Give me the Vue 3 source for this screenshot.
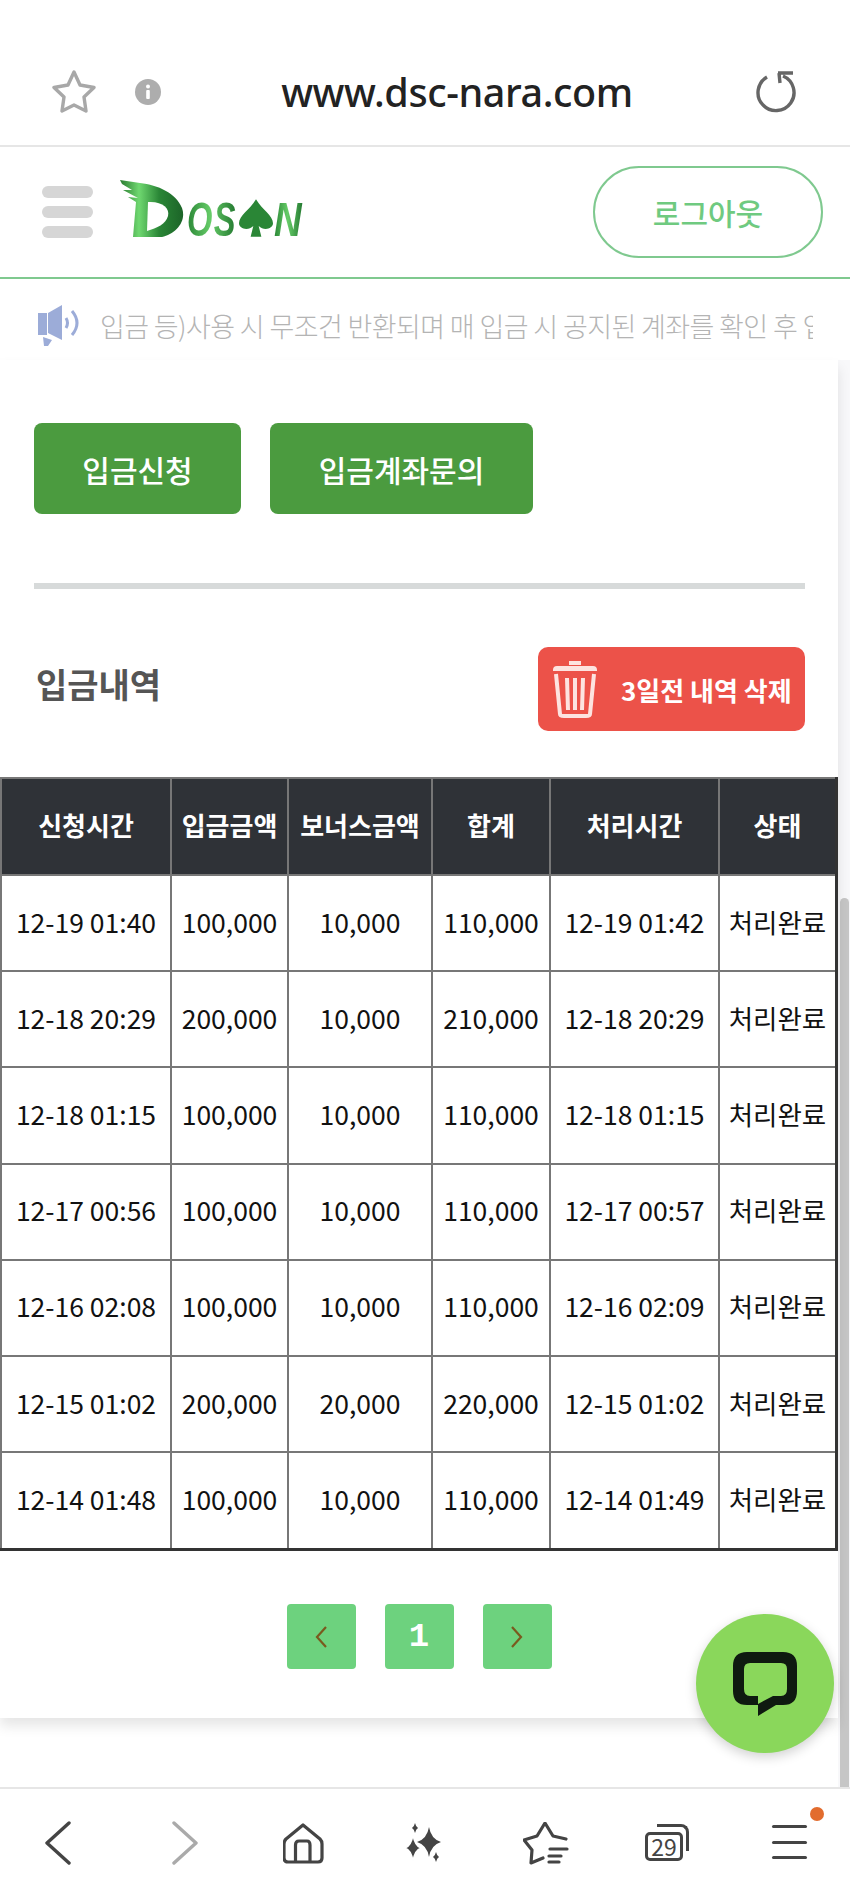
<script setup>
const cols = ['신청시간', '입금금액', '보너스금액', '합계', '처리시간', '상태']
const rows = [
  ['12-19 01:40', '100,000', '10,000', '110,000', '12-19 01:42'],
  ['12-18 20:29', '200,000', '10,000', '210,000', '12-18 20:29'],
  ['12-18 01:15', '100,000', '10,000', '110,000', '12-18 01:15'],
  ['12-17 00:56', '100,000', '10,000', '110,000', '12-17 00:57'],
  ['12-16 02:08', '100,000', '10,000', '110,000', '12-16 02:09'],
  ['12-15 01:02', '200,000', '20,000', '220,000', '12-15 01:02'],
  ['12-14 01:48', '100,000', '10,000', '110,000', '12-14 01:49'],
]
</script>

<template>
  <div class="screen">
    <header class="browser-bar">
      <svg class="star" width="46" height="44" viewBox="0 0 46 44"><path d="M23 2 L29 15 L43 17.5 L33 27 L35 41 L23 35 L11 41 L13 27 L3 17.5 L17 15 Z" fill="none" stroke="#a8a8a8" stroke-width="3.4" stroke-linejoin="round"/></svg>
      <svg class="info" width="26" height="26" viewBox="0 0 26 26"><circle cx="13" cy="13" r="13" fill="#adadad"/><rect x="11.2" y="11" width="3.6" height="9" rx="1" fill="#fff"/><circle cx="13" cy="7.5" r="2" fill="#fff"/></svg>
      <div class="url">www.dsc-nara.com</div>
      <svg class="reload" width="44" height="44" viewBox="0 0 44 44"><path d="M14 7 A18 18 0 1 0 30 6 M26 3 L27 13 M25 3 L40 3" fill="none" stroke="#666" stroke-width="3.4"/></svg>
    </header>

    <div class="site-head">
      <div class="burger"><span></span><span></span><span></span></div>
      <div class="logo">
        <svg width="66" height="58" viewBox="0 0 66 58" class="logo-d">
          <defs><linearGradient id="g" x1="0" y1="0" x2="1" y2="0"><stop offset="0" stop-color="#2a7a30"/><stop offset=".3" stop-color="#6fd870"/><stop offset=".62" stop-color="#2a8636"/><stop offset="1" stop-color="#1c6428"/></linearGradient></defs>
          <path d="M0 0 L20 3 C38 5 56 13 62 28 C67 42 55 54 42 57 L13 57 L16 22 L8 17 L18 18 L3 10 L12 10 L2 4 Z" fill="url(#g)"/>
          <path d="M28 22 C42 21 50 28 48 36 C46 44 37 48 27 51 Z" fill="#fff"/>
        </svg>
        <span class="logo-text os">OS</span>
        <svg width="34" height="40" viewBox="0 0 38 42" class="spade"><path d="M19 0 C26 12 38 18 38 27 C38 33 28 36 22 30 L25 42 L13 42 L16 30 C10 36 0 33 0 27 C0 18 12 12 19 0 Z" fill="#2a8636"/></svg>
        <span class="logo-text n">N</span>
      </div>
      <button class="logout">로그아웃</button>
    </div>

    <div class="ticker">
      <svg width="46" height="42" viewBox="0 0 46 42"><path d="M0 8 H9 V30 H0 Z M10 8 L24 0 V35 L10 28 Z M5 32 L14 35 L10 41 L6 41 Z" fill="#9cacd8"/><path d="M28 13 Q31 18 28 23 M34 6 Q44 18 34 30" fill="none" stroke="#9cacd8" stroke-width="3"/></svg>
      <div class="ticker-window"><span>입금 등)사용 시 무조건 반환되며 매 입금 시 공지된 계좌를 확인 후 입금</span></div>
    </div>

    <div class="scroll-track"><div class="scroll-thumb"></div></div>

    <main class="card">
      <div class="actions">
        <button class="green first">입금신청</button>
        <button class="green second">입금계좌문의</button>
      </div>
      <div class="divider"></div>
      <div class="title-row">
        <h2>입금내역</h2>
        <button class="delete">
          <svg width="46" height="58" viewBox="0 0 46 58"><path d="M17 5 V1 H29 V5 M1 10 Q1 6 5 6 H41 Q45 6 45 10 V11 H1 Z" fill="#fde3e0"/><path d="M4 14 L8 54 Q8 56 12 56 H34 Q38 56 38 54 L42 14 M15 18 L16 50 M23 18 V50 M31 18 L30 50" fill="none" stroke="#fde3e0" stroke-width="4"/></svg>
          <span>3일전 내역 삭제</span>
        </button>
      </div>
      <table>
        <thead><tr><th v-for="c in cols" :key="c">{{ c }}</th></tr></thead>
        <tbody>
          <tr v-for="r in rows" :key="r[0]">
            <td v-for="(v, i) in r" :key="i">{{ v }}</td>
            <td>처리완료</td>
          </tr>
        </tbody>
      </table>
      <div class="pager">
        <button><svg width="14" height="24" viewBox="0 0 14 24"><path d="M12 2 L3 12 L12 22" fill="none" stroke="#7a5a1e" stroke-width="2.2"/></svg></button>
        <button class="num">1</button>
        <button><svg width="14" height="24" viewBox="0 0 14 24"><path d="M2 2 L11 12 L2 22" fill="none" stroke="#7a5a1e" stroke-width="2.2"/></svg></button>
      </div>
    </main>

    <button class="fab">
      <svg width="64" height="64" viewBox="0 0 64 64"><path d="M14 0 H50 Q64 0 64 14 V39 Q64 53 50 53 H43 L25 64 V53 H14 Q0 53 0 39 V14 Q0 0 14 0 Z M17 11 Q11 11 11 17 V37 Q11 44 17 44 H25 V52 L40 44 H48 Q54 44 54 37 V17 Q54 11 48 11 Z" fill="#0f1a10" fill-rule="evenodd"/></svg>
    </button>

    <nav class="bottom">
      <svg class="i-back" width="28" height="44" viewBox="0 0 28 44"><path d="M24 2 L2 22 L24 42" fill="none" stroke="#444" stroke-width="3.4" stroke-linecap="round" stroke-linejoin="round"/></svg>
      <svg class="i-fwd" width="28" height="44" viewBox="0 0 28 44"><path d="M2 2 L24 22 L2 42" fill="none" stroke="#aaa" stroke-width="3.4" stroke-linecap="round" stroke-linejoin="round"/></svg>
      <svg class="i-home" width="41" height="41" viewBox="0 0 41 41"><path d="M20 2 L37 16 Q39 18 39 21 V35 Q39 39 35 39 H5 Q1 39 1 35 V21 Q1 18 3 16 Z M12.5 39 V22 Q12.5 18 16 18 H24 Q27 18 27 22 V39" fill="none" stroke="#444" stroke-width="3.2" stroke-linejoin="round"/></svg>
      <svg class="i-spark" width="40" height="40" viewBox="0 0 40 40"><path d="M26 4 Q28 16 38 19 Q28 22 26 34 Q24 22 14 19 Q24 16 26 4 Z" fill="#444"/><path d="M10 12 Q12 23 18 25 Q12 27 10 38 Q8 27 2 25 Q8 23 10 12 Z" fill="#444" stroke="#fff" stroke-width="1.5"/><path d="M12 0 Q13 4 15 5 Q13 6 12 10 Q11 6 9 5 Q11 4 12 0 Z M33 29 Q34 33 36 34 Q34 35 33 39 Q32 35 30 34 Q32 33 33 29 Z" fill="#444"/></svg>
      <svg class="i-star" width="46" height="44" viewBox="0 0 46 44"><path d="M43 17 L30 14 L22 1 L14 14 L1 18 L9 28 L8 41 L20 36" fill="none" stroke="#444" stroke-width="3.2" stroke-linecap="round" stroke-linejoin="round"/><path d="M27 27 H44 M26 34 H38 M26 40 H36" stroke="#444" stroke-width="3.2" stroke-linecap="round"/></svg>
      <div class="tabs"><span>29</span></div>
      <div class="menu"><i></i><i></i><i></i><b></b></div>
    </nav>
  </div>
</template>

<style scoped>
.screen {
  position: relative;
  width: 850px;
  height: 1898px;
  overflow: hidden;
  background: #fff;
  font-family: "Noto Sans CJK KR", "Noto Sans", sans-serif;
  color: #222;
}
button { font-family: inherit; border: none; padding: 0; }
.browser-bar {
  height: 147px;
  box-sizing: border-box;
  padding-top: 38px;
  border-bottom: 2px solid #e6e6e6;
  display: flex;
  align-items: center;
  position: relative;
}
.star { margin-left: 51px; }
.info { margin-left: 38px; }
.url {
  position: absolute;
  left: 0;
  right: 0;
  text-align: center;
  font-size: 39.5px;
  font-weight: 500;
  color: #222;
  font-family: "Noto Sans", sans-serif;
  letter-spacing: -.4px;
  margin-left: 64px;
}
.reload { margin-left: auto; margin-right: 53px; }
.site-head {
  height: 132px;
  box-sizing: border-box;
  border-bottom: 2px solid #7fc98f;
  display: flex;
  align-items: center;
  padding-left: 42px;
  padding-right: 27px;
}
.burger { display: flex; flex-direction: column; gap: 8px; width: 51px; }
.burger span { height: 12px; border-radius: 6px; background: #d6d6d6; }
.logo { display: flex; align-items: flex-end; margin-left: 27px; margin-bottom: 7px; height: 58px; }
.logo-text {
  display: block;
  flex: none;
  font-family: "Liberation Sans", sans-serif;
  font-weight: 700;
  font-style: italic;
  font-size: 48px;
  line-height: 36px;
  color: transparent;
  background: linear-gradient(90deg, #2a8636, #66cc68 45%, #1c6f2a);
  -webkit-background-clip: text;
  background-clip: text;
  transform-origin: left bottom;
}
.os { width: 76px; margin-left: 1px; margin-right: -24px; transform: scaleX(.68); letter-spacing: 2px; }
.n { width: 38px; margin-right: -8px; transform: scaleX(.8); }
.spade { margin-right: 1px; }
.logout {
  margin-left: auto;
  width: 230px;
  height: 92px;
  border: 2px solid #7fc98f;
  border-radius: 46px;
  background: #fff;
  color: #6fca80;
  font-size: 30px;
  font-weight: 500;
}
.ticker {
  height: 81px;
  box-sizing: border-box;
  padding-top: 12px;
  display: flex;
  align-items: center;
  padding-left: 38px;
}
.ticker-window { width: 713px; margin-left: 16px; overflow: hidden; white-space: nowrap; color: #b4b4b4; font-size: 27px; font-weight: 300; letter-spacing: -.6px; }
.card {
  position: relative;
  height: 1358px;
  width: 838px;
  box-sizing: border-box;
  padding-top: 63px;
  background: #fff;
  box-shadow: 0 8px 12px rgba(0, 0, 0, .1);
}
.actions { display: flex; gap: 29px; padding-left: 34px; }
.green {
  height: 91px;
  border-radius: 8px;
  background: #4b9b3f;
  color: #fff;
  font-size: 30px;
  font-weight: 500;
}
.first { width: 207px; }
.second { width: 263px; }
.divider { height: 6px; background: #d7dada; margin: 69px 33px 0 34px; }
.title-row {
  display: flex;
  justify-content: space-between;
  align-items: center;
  margin: 58px 33px 46px 34px;
}
h2 { margin: 0 0 12px 2px; font-size: 34px; font-weight: 700; color: #555; }
.delete {
  width: 267px;
  height: 84px;
  border-radius: 10px;
  background: #ec5249;
  color: #fff;
  display: flex;
  align-items: center;
  padding-left: 14px;
  box-sizing: border-box;
  gap: 23px;
  font-size: 26px;
  font-weight: 700;
}
table { width: 838px; height: 774px; table-layout: fixed; border-collapse: collapse; border: solid #333; border-width: 2px 3px 3px 2px; }
th, td { border: 2px solid #777; padding: 0 0 4px; text-align: center; white-space: nowrap; }
th { height: 91px; background: #2f3237; color: #fff; font-size: 26px; font-weight: 700; }
td { color: #111; font-size: 26.5px; font-weight: 400; }
th:nth-child(1) { width: 168px; }
th:nth-child(2) { width: 115px; }
th:nth-child(3) { width: 142px; }
th:nth-child(4) { width: 116px; }
th:nth-child(5) { width: 167px; }
.pager { display: flex; justify-content: center; gap: 29px; margin-top: 53px; }
.pager button { width: 69px; height: 65px; border-radius: 4px; background: #6dd27e; display: flex; align-items: center; justify-content: center; }
.pager .num { color: #fff; font-size: 34px; font-weight: 700; font-family: "Liberation Mono", monospace; }
.scroll-track { position: absolute; right: 0; top: 360px; width: 12px; height: 1427px; background: #f8f8fa; }
.scroll-thumb { position: absolute; left: 2px; right: 1px; top: 538px; bottom: 0; border-radius: 5px 5px 0 0; background: #c6c6c6; }
.fab {
  position: absolute;
  left: 696px;
  top: 1614px;
  width: 138px;
  height: 139px;
  border-radius: 50%;
  background: #8ad75b;
  box-shadow: 0 4px 12px rgba(0, 0, 0, .18);
  display: flex;
  align-items: center;
  justify-content: center;
}
.bottom {
  position: absolute;
  left: 0;
  right: 0;
  bottom: 0;
  height: 111px;
  box-sizing: border-box;
  border-top: 2px solid #e6e6e6;
  background: #fff;
}
.bottom > * { position: absolute; }
.i-back { left: 45px; top: 32px; }
.i-fwd { left: 172px; top: 32px; }
.i-home { left: 283px; top: 34px; }
.i-spark { left: 403px; top: 34px; }
.i-star { left: 523px; top: 33px; }
.tabs { left: 645px; top: 43px; width: 32px; height: 23px; border: 3px solid #444; border-radius: 5px; text-align: center; font-size: 23px; line-height: 23px; color: #444; }
.tabs::after { content: ""; position: absolute; left: 9px; top: -11px; width: 29px; height: 24px; border: solid #444; border-width: 3px 3px 0 0; border-radius: 0 8px 0 0; }
.menu { left: 772px; top: 36px; width: 35px; height: 34px; display: flex; flex-direction: column; justify-content: space-between; }
.menu i { display: block; height: 3px; background: #444; border-radius: 2px; }
.menu b { position: absolute; left: 38px; top: -18px; width: 14px; height: 14px; border-radius: 50%; background: #e26c2e; }
</style>
